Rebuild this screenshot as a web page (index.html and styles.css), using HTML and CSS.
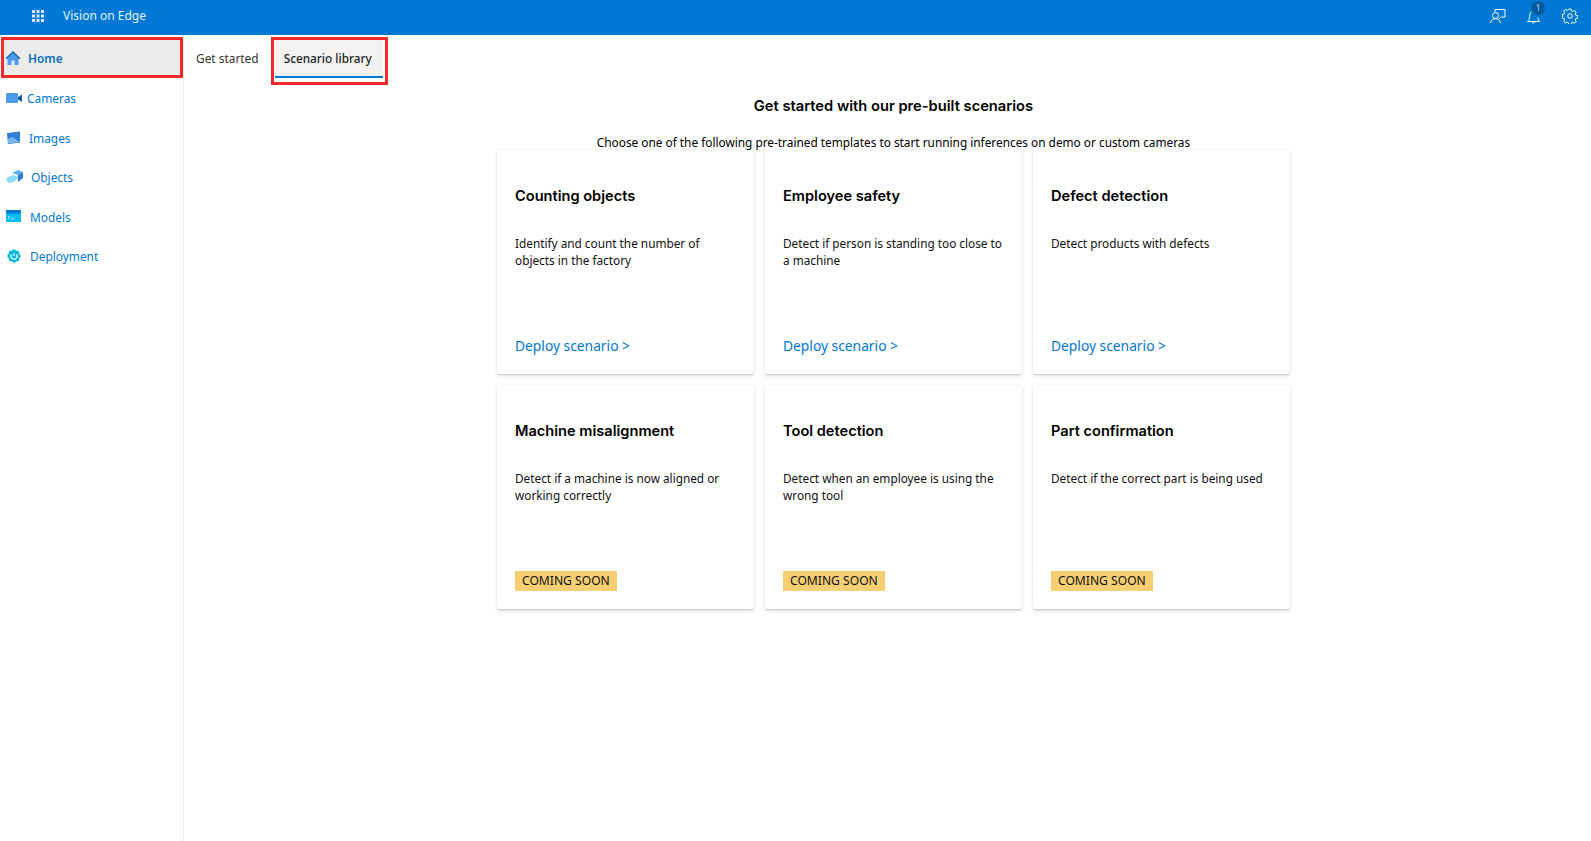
FILE: index.html
```html
<!DOCTYPE html>
<html lang="en">
<head>
<meta charset="utf-8">
<title>Vision on Edge</title>
<link rel="stylesheet" href="styles.css">
</head>
<body>
<header class="topbar">
  <div class="brand">
    <svg class="waffle" width="14" height="14" viewBox="0 0 14 14" fill="#dbe9f7"><rect x="1" y="1" width="3" height="3"/><rect x="5.500" y="1" width="3" height="3"/><rect x="10" y="1" width="3" height="3"/><rect x="1" y="5.500" width="3" height="3"/><rect x="5.500" y="5.500" width="3" height="3"/><rect x="10" y="5.500" width="3" height="3"/><rect x="1" y="10" width="3" height="3"/><rect x="5.500" y="10" width="3" height="3"/><rect x="10" y="10" width="3" height="3"/></svg>
    <span class="app-name">Vision on Edge</span>
  </div>
  <div class="top-icons">
    <svg class="top-icon" width="16" height="16" viewBox="0 0 16 16" fill="none" stroke="#fff"><path d="M5 4V1.500h10v7.500h-4l-2 2"/><circle cx="5.500" cy="7.500" r="3"/><path d="M0.500 15c.3-2.800 2.200-4.300 5-4.300s4.700 1.500 5 4.300"/></svg>
    <div class="bell">
      <svg class="top-icon" width="16" height="16" viewBox="0 0 16 16" fill="none" stroke="#fff"><path d="M1.500 13.500c1.500-1 2-2.500 2-5 0-3 1.500-5 3.500-5.500M1.500 13.500h12M12 9.500c0 2 .5 3 1.500 4M6 13.500c0 1 .7 1.500 1.500 1.500s1.500-.5 1.500-1.500"/></svg>
      <span class="badge">1</span>
    </div>
    <svg class="top-icon" width="16" height="16" viewBox="0 0 16 16" fill="none" stroke="#fff"><circle cx="8" cy="8" r="2.300"/><path d="M6.800 1h2.400l.4 2 1.200.6 1.800-1 1.600 1.700-1 1.700.5 1.200 2 .5v2.400l-2 .5-.5 1.200 1 1.700-1.600 1.700-1.800-1-1.200.5-.4 2H6.800l-.4-2-1.200-.5-1.800 1-1.600-1.700 1-1.700-.5-1.200-2-.5V6.500l2-.5.5-1.200-1-1.700 1.600-1.700 1.800 1 1.200-.6z"/></svg>
  </div>
</header>
<div class="shell">
  <nav class="sidebar">
    <a class="nav-item nav-active">
      <svg class="nav-icon" width="16" height="16" viewBox="0 0 16 16"><path fill="#4a9bea" d="M2.500 8 8 3l5.500 5v7h-4v-4.500h-3V15h-4z"/><path fill="#1565b0" d="M8 1 0.500 8.200l1 1L8 3.200l6.500 6 1-1z"/></svg>
      <span class="home-label">Home</span>
    </a>
    <a class="nav-item">
      <svg class="nav-icon" width="16" height="16" viewBox="0 0 16 16"><rect x="0" y="3" width="12" height="10" rx="1" fill="#4a9bea"/><path fill="#0c5a9e" d="M12 7l4-2.500v7.500l-4-2.500z"/></svg>
      <span class="label-cameras">Cameras</span>
    </a>
    <a class="nav-item">
      <svg class="nav-icon" width="16" height="16" viewBox="0 0 16 16"><path fill="#2f80d4" d="M1 3l13-1.500v11L2 14z"/><path fill="#7ab8f0" d="M1.500 9l5-2 7 5-11.500 1.500z"/></svg>
      <span class="label-images">Images</span>
    </a>
    <a class="nav-item">
      <svg class="nav-icon" width="18" height="14" viewBox="0 0 18 14"><path fill="#8fdcf5" d="M0 8l7-3 6 2-5 5-6 1z"/><path fill="#5fb0ee" d="M6 3l6-3 5 2-5 3z"/><path fill="#2b7fd0" d="M12 5l5-3v6l-5 4z"/></svg>
      <span class="label-objects">Objects</span>
    </a>
    <a class="nav-item">
      <svg class="nav-icon" width="16" height="13" viewBox="0 0 16 13"><rect width="15" height="12" fill="#00bcf2"/><rect width="15" height="3.500" fill="#0078d4"/><path d="M2 6l2 1.500-2 1.500M5 9h3" stroke="#fff" fill="none" stroke-width=".8"/></svg>
      <span class="label-models">Models</span>
    </a>
    <a class="nav-item">
      <svg class="nav-icon" width="16" height="16" viewBox="0 0 16 16"><path fill="#00b7d8" d="M6.500 1.500h3l.4 1.700 1.500-.9 2.200 2.200-.9 1.500 1.800.5v3l-1.800.5.9 1.500-2.200 2.200-1.500-.9-.4 1.700h-3l-.4-1.700-1.500.9-2.200-2.200.9-1.500-1.800-.5v-3l1.800-.5-.9-1.500 2.200-2.200 1.500.9z"/><path fill="none" stroke="#fff" stroke-width="1.200" d="M5.500 6.500a3 3 0 1 0 5 0"/><path stroke="#fff" stroke-width="1.200" d="M8 5v3"/></svg>
      <span class="label-models">Deployment</span>
    </a>
  </nav>
  <main class="content">
    <div class="tabs">
      <a class="tab">Get started</a>
      <div class="tab-frame"><a class="tab tab-active">Scenario library</a></div>
    </div>
    <section class="library">
      <h1 class="lib-title">Get started with our pre-built scenarios</h1>
      <p class="lib-sub">Choose one of the following pre-trained templates to start running inferences on demo or custom cameras</p>
      <div class="cards">
        <article class="card"><h2>Counting objects</h2><p>Identify and count the number of objects in the factory</p><a class="deploy">Deploy scenario &gt;</a></article>
        <article class="card"><h2>Employee safety</h2><p>Detect if person is standing too close to a machine</p><a class="deploy">Deploy scenario &gt;</a></article>
        <article class="card"><h2>Defect detection</h2><p>Detect products with defects</p><a class="deploy">Deploy scenario &gt;</a></article>
        <article class="card"><h2>Machine misalignment</h2><p>Detect if a machine is now aligned or working correctly</p><span class="soon">COMING SOON</span></article>
        <article class="card"><h2>Tool detection</h2><p>Detect when an employee is using the wrong tool</p><span class="soon">COMING SOON</span></article>
        <article class="card"><h2>Part confirmation</h2><p>Detect if the correct part is being used</p><span class="soon">COMING SOON</span></article>
      </div>
    </section>
  </main>
</div>
</body>
</html>
```
FILE: styles.css
```css
* { box-sizing: border-box; }
html, body { margin: 0; height: 100%; }
body { font-family: "Noto Sans", "Open Sans", sans-serif; font-size: 12px; color: #201f1e; background: #fff; overflow: hidden; display: flex; flex-direction: column; }
.topbar { height: 35px; flex: none; background: #0078d4; color: #fff; display: flex; align-items: center; justify-content: space-between; padding: 0 13px 4px 31px; }
.brand { display: flex; align-items: center; gap: 18px; }
.app-name { font-size: 12px; color: #e6f1fb; }
.top-icons { display: flex; align-items: center; gap: 20px; }
.top-icon { display: block; }
.bell { position: relative; width: 16px; height: 16px; }
.badge { position: absolute; left: 5px; top: -7px; width: 14px; height: 14px; border-radius: 50%; background: #005a9e; font-size: 8px; line-height: 14px; text-align: center; color: #ccd9ea; }
.shell { flex: 1; display: flex; min-height: 0; }
.sidebar { width: 184px; flex: none; border-right: 1px solid #edebe9; padding: 2px 0 0 1px; display: flex; flex-direction: column; }
.nav-item { height: 39.5px; display: flex; align-items: center; gap: 6px; padding-left: 5px; color: #0078d4; font-size: 11.9px; }
.nav-active { width: 182px; height: 41px; margin-bottom: .4px; background: #edebe9; border: 3px solid #f5282a; padding: 1px 0 0 1px; gap: 7px; font-weight: 500; }
.home-label { font-weight: 600; color: #106ebe; }
.nav-icon { flex: none; display: block; }
.label-cameras { margin-left: -1px; }
.label-images { margin-left: 1px; }
.label-objects { margin-left: 1px; }
.label-models { margin-left: 2px; }
.content { flex: 1; min-width: 0; display: flex; flex-direction: column; }
.tabs { display: flex; align-items: flex-start; padding: 2px 0 0 3px; height: 50px; }
.tab { display: block; padding: 0 9px; height: 40px; line-height: 42px; font-size: 11.9px; color: #323130; }
.tab-active { background: #f3f2f1; color: #201f1e; font-weight: 500; font-size: 11.8px; border-bottom: 2px solid #0078d4; height: 38px; line-height: 37px; padding-right: 11px; }
.tab-frame { border: 3px solid #f5282a; margin-left: 3px; padding: 0 2px 4px 1px; }
.library { width: 793px; margin-left: 313px; display: flex; flex-direction: column; align-items: center; }
.lib-title { font-family: Inter, sans-serif; font-size: 14.7px; font-weight: 600; color: #000; margin: 12px 0 0; line-height: 18px; }
.lib-sub { margin: 19px 0 0; font-size: 11.84px; line-height: 17px; color: #000; white-space: nowrap; height: 16px; }
.cards { display: grid; grid-template-columns: repeat(3, 257px); grid-auto-rows: 224px; gap: 11px; }
.card { background: #fff; border-radius: 2px; box-shadow: 0 1.6px 3.6px rgba(0,0,0,.13), 0 .3px .9px rgba(0,0,0,.11); padding: 38px 14px 18px 18px; display: flex; flex-direction: column; }
.card h2 { font-family: Inter, sans-serif; font-size: 14.6px; font-weight: 600; margin: 0; line-height: 17px; color: #000; }
.card p { margin: 30px 0 0; font-size: 11.8px; line-height: 17px; color: #111; flex: 1; }
.deploy { font-size: 13.8px; line-height: 20px; color: #0078d4; }
.soon { align-self: flex-start; background: #f6cf75; color: #111; font-size: 12.1px; line-height: 20px; padding: 0 7px; }
```
